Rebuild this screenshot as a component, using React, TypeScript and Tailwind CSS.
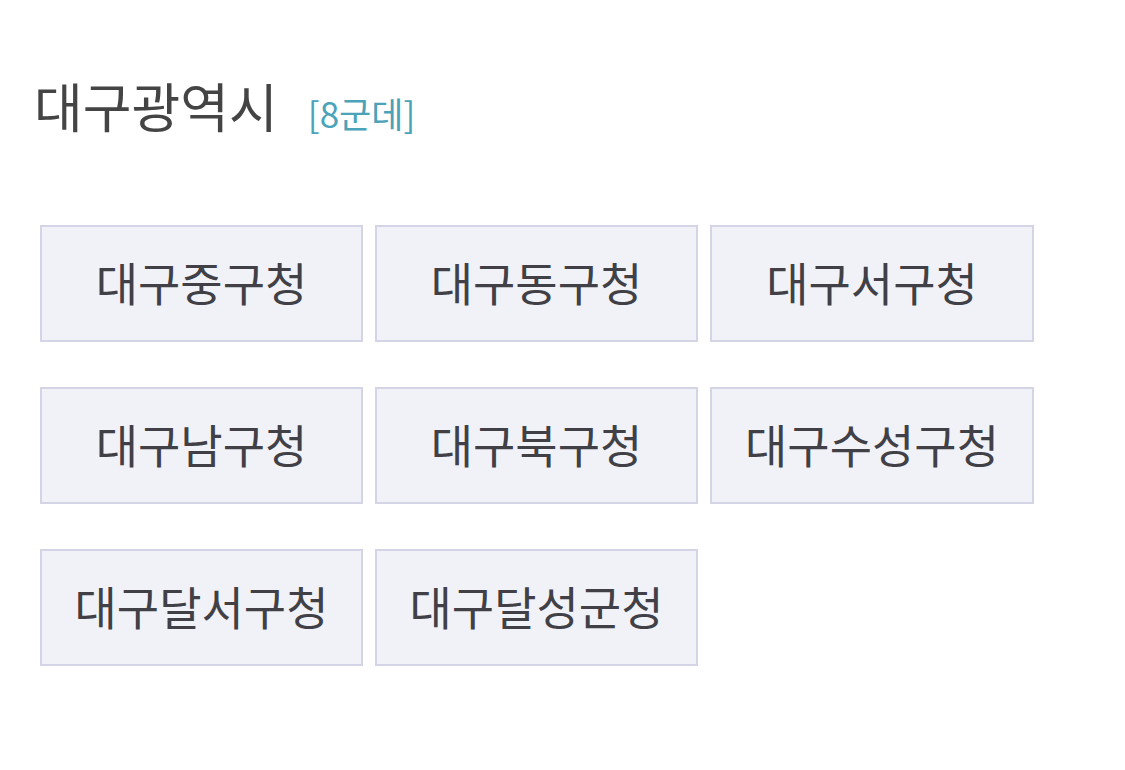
import React from "react";

const items = [
  "대구중구청",
  "대구동구청",
  "대구서구청",
  "대구남구청",
  "대구북구청",
  "대구수성구청",
  "대구달서구청",
  "대구달성군청",
];

export default function App() {
  return (
    <div
      className="w-[1125px] h-[770px] bg-white"
      style={{ fontFamily: '"Noto Sans CJK KR", "Noto Sans", sans-serif' }}
    >
      <div className="pl-[34px] pt-[70px] h-[145px] flex items-baseline">
        <h1 className="text-[53px] leading-[70px] text-[#444444] font-normal">대구광역시</h1>
        <span className="ml-[30px] text-[35px] text-[#4aa3b8]">[8군데]</span>
      </div>
      <div className="mt-[80px] pl-[40px] grid grid-cols-[323px_323px_324px] gap-x-[12px] gap-y-[45px]">
        {items.map((t) => (
          <div
            key={t}
            className="h-[117px] pb-[4px] border-2 border-[#d3d4e6] bg-[#f1f2f8] flex items-center justify-center text-[46px] text-[#404046]"
          >
            {t}
          </div>
        ))}
      </div>
    </div>
  );
}
